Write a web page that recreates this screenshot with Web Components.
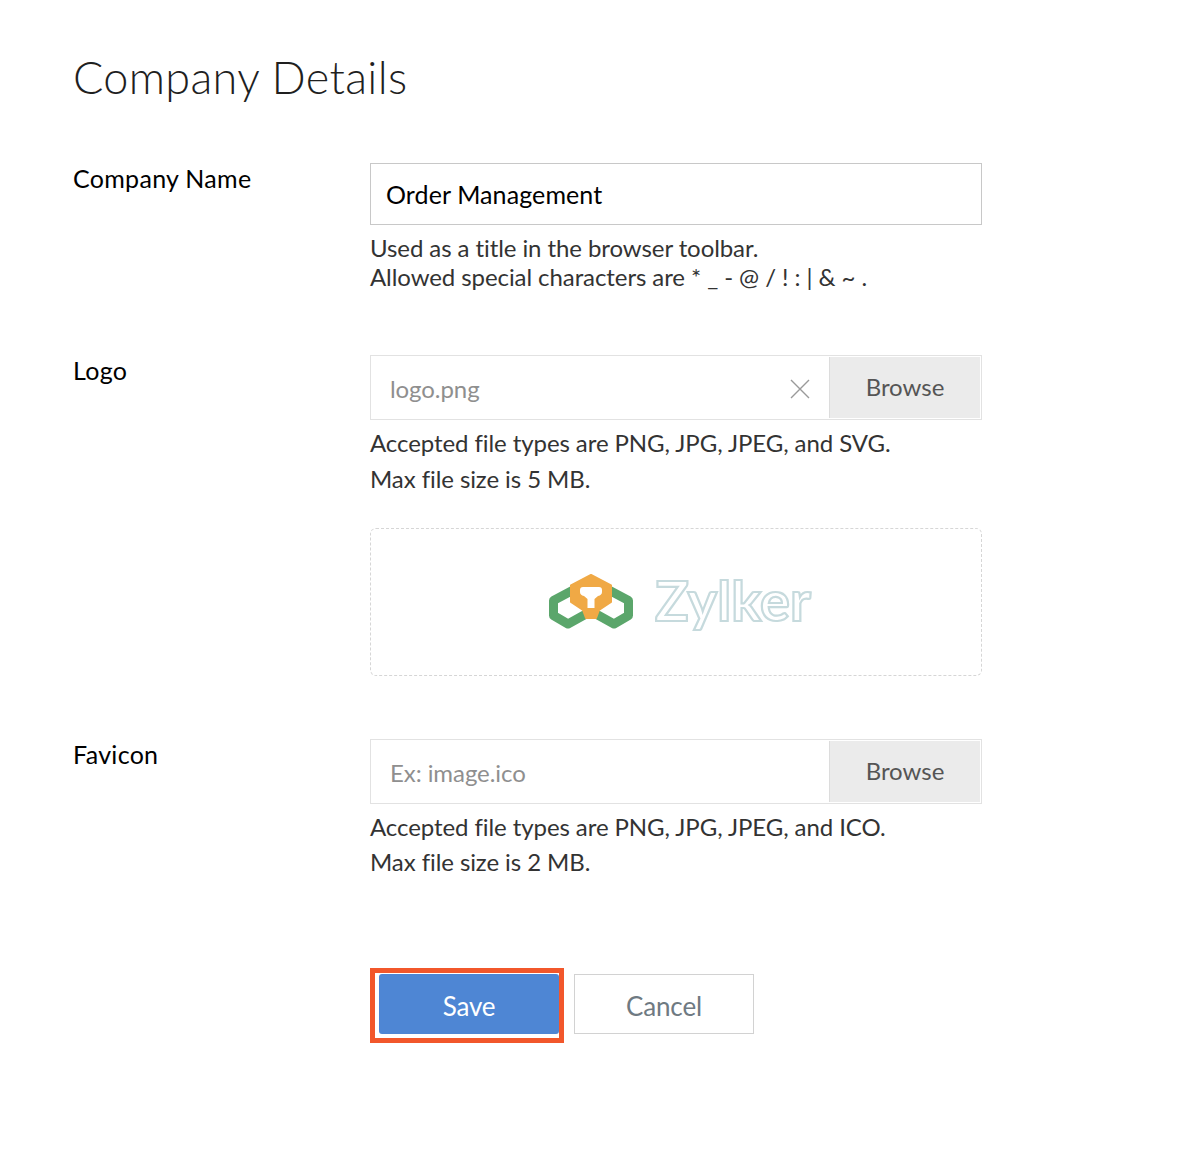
<!DOCTYPE html>
<html lang="en"><head><meta charset="utf-8"><title>Company Details</title>
<style>
html,body{margin:0;padding:0;background:#fff}
body{font-family:Lato,"Open Sans",sans-serif}
</style></head><body>
<settings-page>
  <span slot="title">Company Details</span>
  <form-row label="Company Name" style="--row-h:192px">
    <text-field value="Order Management"></text-field>
    <hint-text lh="29px" mt="8px">Used as a title in the browser toolbar.<br>Allowed special characters are * _ - @ / ! : | &amp; ~ .</hint-text>
  </form-row>
  <form-row label="Logo" style="--row-h:384px">
    <file-field value="logo.png" clearable></file-field>
    <hint-text lh="36px" mt="5px">Accepted file types are PNG, JPG, JPEG, and SVG.<br>Max file size is 5 MB.</hint-text>
    <logo-preview></logo-preview>
  </form-row>
  <form-row label="Favicon" style="--row-h:229px">
    <file-field placeholder="Ex: image.ico"></file-field>
    <hint-text lh="35px" mt="5.25px">Accepted file types are PNG, JPG, JPEG, and ICO.<br>Max file size is 2 MB.</hint-text>
  </form-row>
  <form-actions></form-actions>
</settings-page>
<script>
function def(name,html){
  customElements.define(name,class extends HTMLElement{
    connectedCallback(){
      if(this.shadowRoot)return;
      const r=this.attachShadow({mode:'open'});
      r.innerHTML=typeof html==='function'?html(this):html;
    }
  });
}
def('settings-page',`<style>
:host{display:block;box-sizing:border-box;width:1178px;height:1172px;padding:50px 0 0 73px}
h1{margin:0 0 58px;font:300 45px/55px Lato,sans-serif;color:#1f1f1f;letter-spacing:.33px}
</style><h1><slot name="title"></slot></h1><slot></slot>`);
def('form-row',h=>`<style>
:host{display:grid;grid-template-columns:297px 612px;height:var(--row-h)}
.l{font:400 25px/30px Lato,sans-serif;color:#000;letter-spacing:.3px}
</style><div class="l">${h.getAttribute('label')}</div><div><slot></slot></div>`);
def('text-field',h=>`<style>
:host{display:flex;box-sizing:border-box;height:62px;border:1px solid #c8c8c8;align-items:center;padding-left:15px;font:400 25px/32px Lato,sans-serif;color:#000;letter-spacing:.1px}
</style>${h.getAttribute('value')}`);
def('hint-text',h=>`<style>
:host{display:block;margin-top:${h.getAttribute('mt')};font:400 24px/${h.getAttribute('lh')} Lato,sans-serif;color:#333;letter-spacing:-.08px}
</style><slot></slot>`);
def('file-field',h=>{
  const v=h.getAttribute('value')||h.getAttribute('placeholder');
  const x=h.hasAttribute('clearable')?`<svg width="22" height="22" viewBox="0 0 22 22"><path d="M2 2 20 20M20 2 2 20" stroke="#9a9a9a" stroke-width="1.4" fill="none"/></svg>`:'';
  return `<style>
:host{display:flex;box-sizing:border-box;height:65px;border:1px solid #e2e2e2;align-items:stretch}
.v{flex:1;display:flex;align-items:center;justify-content:space-between;padding:2px 18px 0 19px;font:400 24px/32px Lato,sans-serif;color:#8f8f8f;letter-spacing:-.07px}
svg{margin-top:0;display:block}
.b{width:151px;margin:1px 1px 1px 0;border-left:1px solid #dcdcdc;background:#ebebeb;display:flex;align-items:center;justify-content:center;padding-bottom:1px;box-sizing:border-box;font:400 24px/32px Lato,sans-serif;color:#555}
</style><div class="v"><span>${v}</span>${x}</div><div class="b">Browse</div>`;
});
def('logo-preview',`<style>
:host{display:flex;box-sizing:border-box;height:148px;margin-top:31px;border:1px dashed #d6d6d6;border-radius:6px;align-items:center;justify-content:center;gap:22px;padding-left:8px}
svg{display:block;filter:blur(.6px)}
.z{font:700 56px/62px Lato,sans-serif;color:#fff;-webkit-text-stroke:2.2px #c6dadd;letter-spacing:.2px;filter:blur(.7px);margin-bottom:5px}
</style>
<svg width="84" height="56" viewBox="0 0 84 56" fill="none">
<path d="M28 14 4.5 26.500V41.500L19 50 37 40" stroke="#5ba66b" stroke-width="9" stroke-linejoin="round"/>
<path d="M56 14 79.500 26.500V41.500L65 50 47 40" stroke="#5ba66b" stroke-width="9" stroke-linejoin="round"/>
<path d="M42 1 62 11.500V28L50 36 47 44H37L34 36 22 28V11.500Z" fill="#f0a945" stroke="#f0a945" stroke-width="2" stroke-linejoin="round"/>
<path d="M34 13H50Q53 13 53 16V18Q53 21 49 22L45.500 25V34H38.500V25L35 22Q31 21 31 18V16Q31 13 34 13Z" fill="#fff"/>
</svg>
<div class="z">Zylker</div>`);
def('form-actions',`<style>
:host{display:flex;align-items:flex-start;margin:0 0 0 297px;gap:10px}
.hl{box-sizing:border-box;width:194px;height:75px;border:5px solid #f2572b;padding:1px 0 0 4px;background:#fff}
button{box-sizing:border-box;display:block;height:60px;margin:0;font:400 26px/32px Lato,sans-serif;padding:4px 0 0;cursor:pointer}
.s{width:180px;background:#4e86d4;color:#fff;border:0;border-radius:3px;letter-spacing:-.2px}
.c{width:180px;margin-top:6px;background:#fff;color:#6f7a82;border:1px solid #d2d2d2;letter-spacing:-.1px}
</style><div class="hl"><button class="s">Save</button></div><button class="c">Cancel</button>`);
</script>
</body></html>
